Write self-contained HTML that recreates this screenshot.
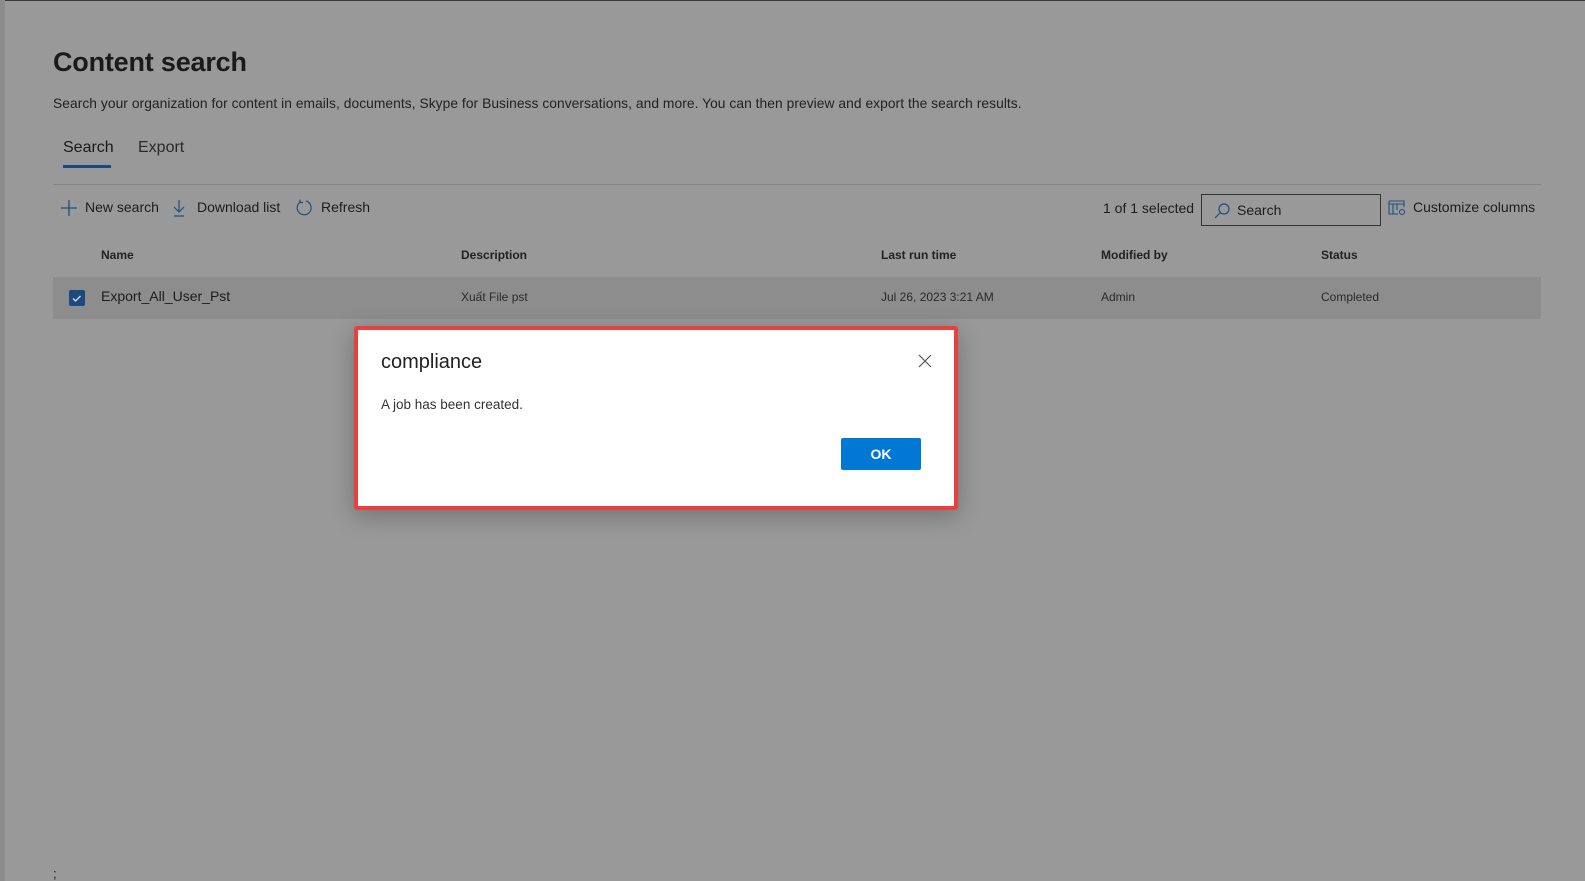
<!DOCTYPE html>
<html><head><meta charset="utf-8"><style>
*{margin:0;padding:0;box-sizing:border-box}
body{width:1585px;height:881px;background:#999;font-family:"Segoe UI","Liberation Sans",sans-serif;color:#1c1c1c;position:relative;overflow:hidden}
.a{position:absolute;white-space:nowrap}
</style></head><body>
<div class="a" style="left:0;top:0;width:1585px;height:1px;background:#3a3a3a"></div>
<div class="a" style="left:0;top:0;width:5px;height:881px;background:#8c8c8c"></div>
<div class="a" style="left:53px;top:47px;font-size:27px;font-weight:bold;color:#1a1a1a;letter-spacing:-0.2px">Content search</div>
<div class="a" style="left:53px;top:96px;font-size:13.8px;color:#222;letter-spacing:0.05px">Search your organization for content in emails, documents, Skype for Business conversations, and more. You can then preview and export the search results.</div>
<div class="a" style="left:63px;top:139px;font-size:16px;color:#1a1a1a">Search</div>
<div class="a" style="left:138px;top:139px;font-size:16px;color:#2a2a2a">Export</div>
<div class="a" style="left:63px;top:165px;width:48px;height:3px;background:#1c4a7e"></div>
<div class="a" style="left:53px;top:184px;width:1488px;height:1px;background:#858585"></div>
<svg class="a" style="left:60px;top:199px" width="18" height="18"><path d="M9 1v16M1 9h16" stroke="#1f4f80" stroke-width="1.3"/></svg>
<div class="a" style="left:85px;top:199px;font-size:14px">New search</div>
<svg class="a" style="left:172px;top:199px" width="14" height="18"><path d="M7 1v12M2 8l5 5 5-5M2 17h10" stroke="#1f4f80" stroke-width="1.2" fill="none"/></svg>
<div class="a" style="left:197px;top:199px;font-size:14px">Download list</div>
<svg class="a" style="left:295px;top:199px" width="18" height="18"><path d="M6 2.5A7 7 0 1 0 11 2" stroke="#1f4f80" stroke-width="1.2" fill="none"/><path d="M5 0.5v3h3" stroke="#1f4f80" stroke-width="1.2" fill="none"/></svg>
<div class="a" style="left:321px;top:199px;font-size:14px">Refresh</div>
<div class="a" style="left:1103px;top:200px;font-size:14px">1 of 1 selected</div>
<div class="a" style="left:1201px;top:194px;width:180px;height:32px;border:1px solid #333"></div>
<svg class="a" style="left:1213px;top:202px" width="18" height="18"><circle cx="11" cy="7" r="5" stroke="#1f4f80" stroke-width="1.2" fill="none"/><path d="M7.5 10.5L2 16" stroke="#1f4f80" stroke-width="1.2"/></svg>
<div class="a" style="left:1237px;top:202px;font-size:14px">Search</div>
<svg class="a" style="left:1388px;top:200px" width="18" height="16"><path d="M1 1h15v6M1 1v13h9M1 4h15M5 4v10M9 4v6" stroke="#1f4f80" stroke-width="1.1" fill="none"/><circle cx="14" cy="12" r="2.5" stroke="#1f4f80" stroke-width="1.1" fill="none"/></svg>
<div class="a" style="left:1413px;top:199px;font-size:14px">Customize columns</div>
<div class="a" style="left:101px;top:248px;font-size:12px;font-weight:bold;color:#222">Name</div>
<div class="a" style="left:461px;top:248px;font-size:12px;font-weight:bold;color:#222">Description</div>
<div class="a" style="left:881px;top:248px;font-size:12px;font-weight:bold;color:#222">Last run time</div>
<div class="a" style="left:1101px;top:248px;font-size:12px;font-weight:bold;color:#222">Modified by</div>
<div class="a" style="left:1321px;top:248px;font-size:12px;font-weight:bold;color:#222">Status</div>
<div class="a" style="left:53px;top:277px;width:1488px;height:42px;background:#8d8d8d"></div>
<div class="a" style="left:69px;top:290px;width:16px;height:16px;background:#1c4a7e;border-radius:2px"></div>
<svg class="a" style="left:69px;top:290px" width="16" height="16"><path d="M4 8.5l2.5 2.5 5-5" stroke="#ddd" stroke-width="1.3" fill="none"/></svg>
<div class="a" style="left:101px;top:288px;font-size:14px">Export_All_User_Pst</div>
<div class="a" style="left:461px;top:290px;font-size:12px;color:#2a2a2a">Xuất File pst</div>
<div class="a" style="left:881px;top:290px;font-size:12px;color:#2a2a2a">Jul 26, 2023 3:21 AM</div>
<div class="a" style="left:1101px;top:290px;font-size:12px;color:#2a2a2a">Admin</div>
<div class="a" style="left:1321px;top:290px;font-size:12px;color:#2a2a2a">Completed</div>
<div class="a" style="left:354px;top:326px;width:604px;height:184px;background:#fff;border:4px solid #e8403f;border-radius:3px;box-shadow:0 6px 24px rgba(0,0,0,.25)"></div>
<div class="a" style="left:381px;top:351px;font-size:20px;color:#222">compliance</div>
<svg class="a" style="left:918px;top:354px" width="14" height="14"><path d="M1 1l12 12M13 1L1 13" stroke="#555" stroke-width="1.2"/></svg>
<div class="a" style="left:381px;top:397px;font-size:13.5px;color:#333">A job has been created.</div>
<div class="a" style="left:841px;top:438px;width:80px;height:32px;background:#0078d4;border-radius:2px;color:#fff;font-size:14px;font-weight:bold;text-align:center;line-height:32px">OK</div>
<div class="a" style="left:53px;top:866px;font-size:13px">;</div>
</body></html>
